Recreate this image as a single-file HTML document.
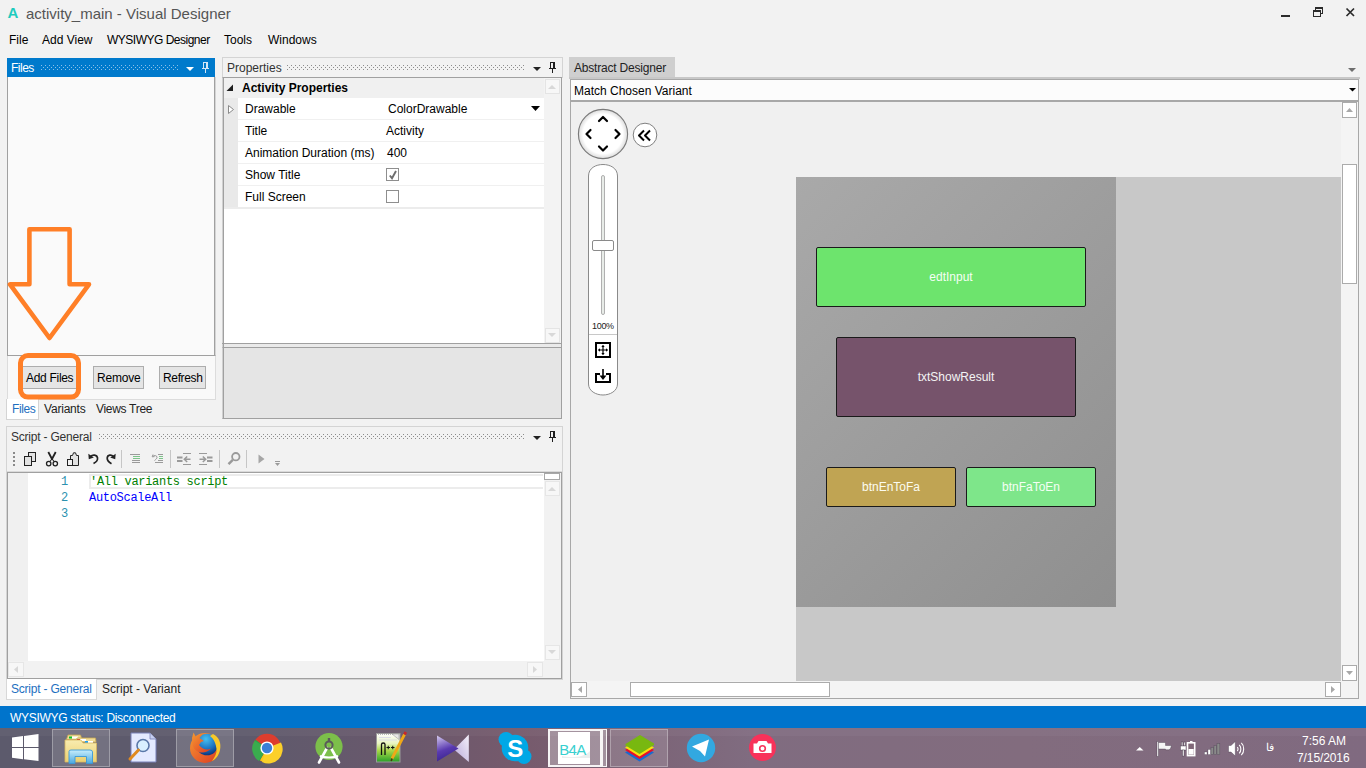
<!DOCTYPE html>
<html><head><meta charset="utf-8">
<style>
*{margin:0;padding:0;box-sizing:border-box}
html,body{width:1366px;height:768px;overflow:hidden;background:#f2f2f2;font-family:"Liberation Sans",sans-serif;font-size:12px;color:#000;position:relative}
.a{position:absolute}
.t{position:absolute;white-space:nowrap;line-height:1}
.dots{position:absolute;background-image:radial-gradient(circle,#a8a8a8 0.7px,transparent 1px);background-size:4px 4px}
.btn{position:absolute;background:#e5e5e5;border:1px solid #adadad}
.mono{font-family:"Liberation Mono",monospace;letter-spacing:-0.3px}
svg{position:absolute;overflow:visible}
</style></head><body>

<!-- ===== title bar ===== -->
<div class="t" style="left:7.5px;top:5px;font-size:15px;font-weight:bold;color:#1ecbbe">A</div>
<div class="t" style="left:26px;top:6px;font-size:15px;color:#555">activity_main - Visual Designer</div>
<svg style="left:0;top:0" width="1366" height="30">
 <g fill="#2b2b2b">
  <rect x="1281" y="15" width="9" height="2"/>
  <rect x="1313" y="10" width="8" height="2"/><rect x="1313" y="10" width="1" height="7"/><rect x="1320" y="10" width="1" height="7"/><rect x="1313" y="16" width="8" height="1"/>
  <rect x="1315" y="7" width="8" height="2"/><rect x="1315" y="7" width="1" height="3"/><rect x="1322" y="7" width="1" height="7"/><rect x="1321" y="13" width="2" height="1"/>
 </g>
 <path d="M1346.5 8.5L1354 16M1354 8.5L1346.5 16" stroke="#2b2b2b" stroke-width="1.7"/>
</svg>

<!-- ===== menu ===== -->
<div class="t" style="left:9px;top:34px">File</div>
<div class="t" style="left:42px;top:34px">Add View</div>
<div class="t" style="left:107px;top:34px;letter-spacing:-0.5px">WYSIWYG Designer</div>
<div class="t" style="left:224px;top:34px">Tools</div>
<div class="t" style="left:268px;top:34px">Windows</div>

<!-- ===== Files panel ===== -->
<div class="a" style="left:7px;top:58px;width:208px;height:19px;background:#007acc"></div>
<div class="t" style="left:11px;top:62px;color:#fff;letter-spacing:-0.5px">Files</div>
<svg style="left:0;top:0" width="200" height="80"><defs><pattern id="pd1" patternUnits="userSpaceOnUse" x="1" y="65" width="4" height="4"><rect x="0" y="0" width="1" height="1" fill="#8cc0ea"/><rect x="2" y="2" width="1" height="1" fill="#8cc0ea"/></pattern></defs><rect x="41" y="65" width="137" height="5" fill="url(#pd1)"/></svg>
<svg style="left:0;top:0" width="220" height="80">
 <path d="M186 67H194L190 71Z" fill="#fff"/>
 <g fill="#d4e6f6"><rect x="203" y="62" width="5" height="1"/><rect x="203" y="62" width="1" height="6"/><rect x="206" y="62" width="2" height="6"/><rect x="202" y="68" width="7" height="1"/><rect x="205" y="69" width="1" height="4"/></g>
</svg>
<div class="a" style="left:7px;top:77px;width:209px;height:279px;background:#fafafa;border:1px solid #a0a0a0;border-top:none;border-right:1px solid #d4d4d4;box-shadow:inset -1px 0 0 #a0a0a0"></div>
<div class="a" style="left:7px;top:356px;width:209px;height:44px;background:#f9f9f9;border:1px solid #dcdcdc;border-top:none"></div>
<div class="btn" style="left:21px;top:366px;width:60px;height:23px"></div>
<div class="t" style="left:26px;top:372px;letter-spacing:-0.3px">Add Files</div>
<div class="btn" style="left:93px;top:366px;width:51px;height:23px"></div>
<div class="t" style="left:97px;top:372px;letter-spacing:-0.2px">Remove</div>
<div class="btn" style="left:159px;top:366px;width:47px;height:23px"></div>
<div class="t" style="left:163px;top:372px;letter-spacing:-0.35px">Refresh</div>
<div class="a" style="left:6px;top:399px;width:33px;height:21px;background:#fff;border:1px solid #d4d4d4;border-top:none"></div>
<div class="t" style="left:12px;top:403px;color:#1e6fc0;letter-spacing:-0.4px">Files</div>
<div class="t" style="left:44px;top:403px;color:#222;letter-spacing:-0.2px">Variants</div>
<div class="t" style="left:96px;top:403px;color:#222;letter-spacing:-0.3px">Views Tree</div>
<svg style="left:0;top:0" width="220" height="420">
 <path d="M29.4 229.3H69.6V284.3H89L49.5 338L10 284.3H29.4Z" fill="none" stroke="#ff7f27" stroke-width="4.6" stroke-linejoin="round"/>
 <rect x="20.5" y="355.5" width="58" height="41.6" rx="7.5" fill="none" stroke="#ff7f27" stroke-width="5"/>
</svg>

<!-- ===== Properties panel ===== -->
<div class="a" style="left:222px;top:57px;width:341px;height:21px;background:#f2f2f2;border:1px solid #d4d4d4;border-bottom:none"></div>
<div class="t" style="left:227px;top:62px;color:#333">Properties</div>
<svg style="left:0;top:0" width="560" height="80"><defs><pattern id="pd2" patternUnits="userSpaceOnUse" x="3" y="65" width="4" height="4"><rect x="0" y="0" width="1" height="1" fill="#8c8c8c"/><rect x="2" y="2" width="1" height="1" fill="#8c8c8c"/></pattern></defs><rect x="287" y="65" width="237" height="5" fill="url(#pd2)"/></svg>
<svg style="left:0;top:0" width="570" height="80">
 <path d="M533 67H541L537 71Z" fill="#222"/>
 <g fill="#1e1e1e"><rect x="550" y="62" width="5" height="1"/><rect x="550" y="62" width="1" height="6"/><rect x="553" y="62" width="2" height="6"/><rect x="549" y="68" width="7" height="1"/><rect x="552" y="69" width="1" height="4"/></g>
</svg>
<div class="a" style="left:222px;top:77px;width:340px;height:267px;background:#fff;border:1px solid #a0a0a0;border-bottom:none;border-left-color:#d0d0d0;box-shadow:inset 1px 0 0 #a0a0a0"></div>
<div class="a" style="left:224px;top:78px;width:320px;height:20px;background:#f0f0f0"></div>
<div class="a" style="left:224px;top:98px;width:14px;height:110px;background:#e9e9e9"></div>
<div class="a" style="left:544px;top:78px;width:17px;height:265px;background:#f3f3f3"></div>
<div class="a" style="left:545px;top:79px;width:15px;height:15px;background:#f7f7f7;border:1px solid #e4e4e4"></div>
<div class="a" style="left:545px;top:328px;width:15px;height:15px;background:#f7f7f7;border:1px solid #e4e4e4"></div>
<svg style="left:0;top:0" width="570" height="420">
 <path d="M548 89H556L552 85Z" fill="#d8d8d8"/>
 <path d="M548 333H556L552 337Z" fill="#d8d8d8"/>
 <path d="M226.5 91H233V84.5Z" fill="#1e1e1e"/>
 <path d="M228.5 105.5L233.5 109.5L228.5 113.5Z" fill="#fff" stroke="#8a8a8a" stroke-width="1"/>
</svg>
<div class="t" style="left:242px;top:82px;font-weight:bold">Activity Properties</div>
<div class="a" style="left:238px;top:119px;width:306px;height:1px;background:#f0f0f0"></div>
<div class="a" style="left:238px;top:141px;width:306px;height:1px;background:#f0f0f0"></div>
<div class="a" style="left:238px;top:163px;width:306px;height:1px;background:#f0f0f0"></div>
<div class="a" style="left:238px;top:185px;width:306px;height:1px;background:#f0f0f0"></div>
<div class="a" style="left:224px;top:207px;width:320px;height:2px;background:#ececec"></div>
<div class="t" style="left:245px;top:103px">Drawable</div>
<div class="t" style="left:245px;top:125px">Title</div>
<div class="t" style="left:245px;top:147px">Animation Duration (ms)</div>
<div class="t" style="left:245px;top:169px">Show Title</div>
<div class="t" style="left:245px;top:191px">Full Screen</div>
<div class="t" style="left:388px;top:103px">ColorDrawable</div>
<div class="t" style="left:386px;top:125px">Activity</div>
<div class="t" style="left:387px;top:147px">400</div>
<svg style="left:0;top:0" width="570" height="220">
 <path d="M531 106H540L535.5 111Z" fill="#000"/>
 <rect x="386.5" y="168.5" width="12" height="12" fill="#fff" stroke="#8e8e8e"/>
 <path d="M389.8 175.5L392 178.2L396 171" fill="none" stroke="#6e6e6e" stroke-width="1.9"/>
 <rect x="386.5" y="190.5" width="12" height="12" fill="#fff" stroke="#8e8e8e"/>
</svg>
<div class="a" style="left:222px;top:343px;width:340px;height:1px;background:#a0a0a0"></div>
<div class="a" style="left:222px;top:344px;width:340px;height:3px;background:#eaeaea;border-left:1px solid #d0d0d0;border-right:1px solid #a0a0a0;box-shadow:inset 1px 0 0 #a0a0a0"></div>
<div class="a" style="left:222px;top:347px;width:340px;height:72px;background:#e5e5e5;border:1px solid #a0a0a0;border-left-color:#d0d0d0;box-shadow:inset 1px 0 0 #a0a0a0"></div>

<!-- ===== Abstract Designer ===== -->
<div class="a" style="left:569px;top:57px;width:106px;height:21px;background:#cfcfcf"></div>
<div class="t" style="left:574px;top:62px;color:#222;letter-spacing:-0.2px">Abstract Designer</div>
<svg style="left:0;top:0" width="1366" height="110">
 <path d="M1348 68H1356L1352 72Z" fill="#6e6e6e"/>
</svg>
<div class="a" style="left:569px;top:77px;width:791px;height:2px;background:#c8c8c8"></div>
<div class="a" style="left:570px;top:79px;width:789px;height:23px;background:#fcfcfc;border:1px solid #a8a8a8;border-bottom:2px solid #a8a8a8"></div>
<div class="t" style="left:574px;top:85px">Match Chosen Variant</div>
<svg style="left:0;top:0" width="1366" height="110">
 <path d="M1349 88H1356L1352.5 91.5Z" fill="#000"/>
</svg>
<div class="a" style="left:570px;top:102px;width:789px;height:597px;background:#f0f0f0;border:1px solid #a8a8a8;border-top:none"></div>
<!-- device area -->
<div class="a" style="left:796px;top:177px;width:545px;height:504px;background:#c8c8c8"></div>
<div class="a" style="left:796px;top:177px;width:320px;height:430px;background:linear-gradient(135deg,#a9a9a9 0%,#9c9c9c 50%,#8f8f8f 100%)"></div>
<div class="a" style="left:816px;top:247px;width:270px;height:60px;background:#6de46d;border:1px solid #1a1a1a;border-radius:2px"></div>
<div class="t" style="left:816px;top:271px;width:270px;text-align:center;color:#f4fff4">edtInput</div>
<div class="a" style="left:836px;top:337px;width:240px;height:80px;background:#76536b;border:1px solid #1a1a1a;border-radius:2px"></div>
<div class="t" style="left:836px;top:371px;width:240px;text-align:center;color:#f4f4f4">txtShowResult</div>
<div class="a" style="left:826px;top:467px;width:130px;height:40px;background:#c0a453;border:1px solid #1a1a1a;border-radius:2px"></div>
<div class="t" style="left:826px;top:481px;width:130px;text-align:center;color:#fcfcf0">btnEnToFa</div>
<div class="a" style="left:966px;top:467px;width:130px;height:40px;background:#7ee68a;border:1px solid #1a1a1a;border-radius:2px"></div>
<div class="t" style="left:966px;top:481px;width:130px;text-align:center;color:#f4fff4">btnFaToEn</div>
<!-- scrollbars -->
<div class="a" style="left:1341px;top:102px;width:17px;height:596px;background:#f4f4f4"></div>
<div class="a" style="left:571px;top:681px;width:770px;height:17px;background:#f4f4f4"></div>
<div class="a" style="left:1342px;top:102px;width:15px;height:16px;background:#fff;border:1px solid #ababab"></div>
<div class="a" style="left:1342px;top:164px;width:15px;height:120px;background:#fff;border:1px solid #ababab"></div>
<div class="a" style="left:1342px;top:665px;width:15px;height:16px;background:#fff;border:1px solid #ababab"></div>
<div class="a" style="left:571px;top:682px;width:16px;height:15px;background:#fff;border:1px solid #ababab"></div>
<div class="a" style="left:630px;top:682px;width:200px;height:15px;background:#fff;border:1px solid #ababab"></div>
<div class="a" style="left:1325px;top:682px;width:16px;height:15px;background:#fff;border:1px solid #ababab"></div>
<svg style="left:0;top:0" width="1366" height="700">
 <path d="M1346 112H1353L1349.5 108Z" fill="#a8a8a8"/>
 <path d="M1346 671H1353L1349.5 675Z" fill="#a8a8a8"/>
 <path d="M582 686V693L578 689.5Z" fill="#a8a8a8"/>
 <path d="M1331 686V693L1335 689.5Z" fill="#a8a8a8"/>
</svg>
<!-- nav controls -->
<svg style="left:0;top:0" width="700" height="400">
 <defs>
  <radialGradient id="cg" cx="50%" cy="50%" r="50%"><stop offset="80%" stop-color="#fff"/><stop offset="100%" stop-color="#dcdcdc"/></radialGradient>
 </defs>
 <circle cx="603" cy="134" r="24.6" fill="url(#cg)" stroke="#7a7a7a" stroke-width="1.1"/>
 <g fill="none" stroke="#000" stroke-width="2.2" stroke-linecap="round" stroke-linejoin="round">
  <path d="M599 121L603 117L607 121"/>
  <path d="M599 146.5L603 150.5L607 146.5"/>
  <path d="M590.5 130L586.5 134L590.5 138"/>
  <path d="M615.5 130L619.5 134L615.5 138"/>
 </g>
 <circle cx="645" cy="135" r="11.8" fill="#fff" stroke="#808080" stroke-width="1"/>
 <g fill="none" stroke="#000" stroke-width="2" stroke-linejoin="round">
  <path d="M644 130.5L639 135.5L644 140.5"/>
  <path d="M650 130.5L645 135.5L650 140.5"/>
 </g>
 <path d="M588.5 176C588.5 168 596 164.5 603 164.5C610 164.5 617.5 168 617.5 176V384C617.5 391 610 395 603 395C596 395 588.5 391 588.5 384Z" fill="#fff" stroke="#8a8a8a" stroke-width="1"/>
 <rect x="601.5" y="175.5" width="3" height="139" rx="1.5" fill="#e8ece8" stroke="#b0b0b0" stroke-width="1"/>
 <rect x="592.5" y="240.5" width="21" height="10" rx="1.5" fill="#fff" stroke="#8a8a8a" stroke-width="1"/>
 <path d="M589 334.5H617" stroke="#c8c8c8" stroke-width="1"/>
 <rect x="596" y="343" width="14" height="14" fill="none" stroke="#000" stroke-width="2"/>
 <g stroke="#000" stroke-width="1.2" fill="#000">
  <path d="M603 345.5V354.5M598.5 350H607.5" fill="none"/>
  <path d="M603 345L601.3 347H604.7Z M603 355L601.3 353H604.7Z M598 350L600 348.3V351.7Z M608 350L606 348.3V351.7Z" stroke="none"/>
 </g>
 <path d="M600 374H596V382H610V374H606" fill="none" stroke="#000" stroke-width="2"/>
 <path d="M603 369V378" stroke="#000" stroke-width="1.6"/>
 <path d="M599.5 375.5L603 380L606.5 375.5Z" fill="#000"/>
</svg>
<div class="t" style="left:592px;top:322px;font-size:9px;color:#222;letter-spacing:-0.3px">100%</div>

<!-- ===== Script panel ===== -->
<div class="a" style="left:6px;top:426px;width:557px;height:254px;background:#f2f2f2;border:1px solid #d4d4d4"></div>
<div class="t" style="left:11px;top:431px;color:#333;letter-spacing:-0.21px">Script - General</div>
<svg style="left:0;top:0" width="560" height="450"><defs><pattern id="pd3" patternUnits="userSpaceOnUse" x="3" y="434" width="4" height="4"><rect x="0" y="0" width="1" height="1" fill="#8c8c8c"/><rect x="2" y="2" width="1" height="1" fill="#8c8c8c"/></pattern></defs><rect x="99" y="434" width="425" height="5" fill="url(#pd3)"/></svg>
<svg style="left:0;top:0" width="570" height="480">
 <path d="M533 436H541L537 440Z" fill="#222"/>
 <g fill="#1e1e1e"><rect x="550" y="431" width="5" height="1"/><rect x="550" y="431" width="1" height="6"/><rect x="553" y="431" width="2" height="6"/><rect x="549" y="437" width="7" height="1"/><rect x="552" y="438" width="1" height="4"/></g>
</svg>
<!-- toolbar icons -->
<svg style="left:0;top:0" width="300" height="480">
 <g fill="#8a8a8a"><rect x="13" y="452" width="2" height="2"/><rect x="13" y="456" width="2" height="2"/><rect x="13" y="460" width="2" height="2"/><rect x="13" y="464" width="2" height="2"/></g>
 <rect x="28.5" y="452.5" width="7" height="9" fill="#e2e2e2" stroke="#222" stroke-width="1"/>
 <rect x="24.5" y="456.5" width="7" height="9" fill="#e2e2e2" stroke="#222" stroke-width="1"/>
 <path d="M48.3 452L52 459M55.7 452L52 459" stroke="#222" stroke-width="1.8" fill="none"/>
 <path d="M52 459L49.8 461.5M52 459L54.2 461.5" stroke="#222" stroke-width="1.1" fill="none"/>
 <circle cx="48.7" cy="463.6" r="2.2" fill="#f4f4f4" stroke="#222" stroke-width="1.3"/>
 <circle cx="55.3" cy="463.6" r="2.2" fill="#f4f4f4" stroke="#222" stroke-width="1.3"/>
 <path d="M70.5 465.5V455.5H72.5L73.5 452.8H75.5L76.5 455.5H78.5V465.5Z" fill="#e2e2e2" stroke="#222" stroke-width="1"/>
 <rect x="67.5" y="459.5" width="5" height="6" fill="#f2f2f2" stroke="#222" stroke-width="1"/>
 <path d="M90.5 456.5C92.5 454.5 97 454.5 97.5 458C98 461 95.5 462.5 93.5 463.5" fill="none" stroke="#222" stroke-width="1.7"/>
 <path d="M88.3 453.8L88.8 459.2L93.8 457.6Z" fill="#222"/>
 <path d="M113.5 456.5C111.5 454.5 107.5 454.5 107.2 458C107 461 109.5 462.5 111.5 463.7" fill="none" stroke="#222" stroke-width="1.7"/>
 <path d="M115.7 453.8L115.2 459.2L110.2 457.6Z" fill="#222"/>
 <g fill="#c6c6c6"><rect x="121" y="450" width="1" height="18"/><rect x="170" y="450" width="1" height="18"/><rect x="219" y="450" width="1" height="18"/><rect x="246" y="450" width="1" height="18"/></g>
 <g fill="#9a9a9a">
  <rect x="130" y="454" width="2" height="1"/><rect x="132" y="454" width="8" height="1"/>
  <rect x="132" y="460" width="8" height="1"/><rect x="132" y="462" width="8" height="1"/>
  <rect x="155" y="462" width="8" height="1"/><rect x="158" y="454" width="5" height="1"/><rect x="158" y="460" width="5" height="1"/>
  <rect x="183" y="453" width="8" height="1"/><rect x="183" y="464" width="8" height="1"/>
  <rect x="177" y="456.5" width="5.5" height="2"/><rect x="177" y="460" width="5.5" height="2"/>
  <rect x="199" y="453" width="8" height="1"/><rect x="199" y="464" width="8" height="1"/>
  <rect x="207" y="456.5" width="5.5" height="2"/><rect x="207" y="460" width="5.5" height="2"/>
 </g>
 <g fill="#7cc48a"><rect x="133" y="456" width="7" height="1"/><rect x="133" y="458" width="7" height="1"/><rect x="159" y="456" width="4" height="1"/><rect x="159" y="458" width="4" height="1"/></g>
 <path d="M153 454.5L152.2 456.8L154.5 456.6M152.6 456.5C154 455 157 455.3 157 457.3C157 458.5 155.5 459.8 154.5 460.5" fill="none" stroke="#9a9a9a" stroke-width="1"/>
 <path d="M190.5 459.3H184.5M187.2 456.5L184.3 459.3L187.2 462" fill="none" stroke="#9a9a9a" stroke-width="1.5"/>
 <path d="M199.5 459.3H205.5M202.8 456.5L205.7 459.3L202.8 462" fill="none" stroke="#9a9a9a" stroke-width="1.5"/>
 <circle cx="235.8" cy="456.7" r="3.7" fill="none" stroke="#9a9a9a" stroke-width="1.8"/>
 <path d="M232.8 459.8L228.5 464.2" stroke="#9a9a9a" stroke-width="2.4"/>
 <path d="M258.5 454.5V463.5L264.5 459Z" fill="#a6a6a6"/>
 <rect x="275" y="461" width="5" height="1" fill="#9a9a9a"/><path d="M275 463H280L277.5 466Z" fill="#9a9a9a"/>
</svg>
<!-- editor -->
<div class="a" style="left:7px;top:471px;width:555px;height:1px;background:#dadada"></div>
<div class="a" style="left:7px;top:472px;width:555px;height:207px;background:#fff;border:1px solid #a0a0a0"></div>
<div class="a" style="left:8px;top:473px;width:20px;height:188px;background:#f0f0f0"></div>
<div class="a" style="left:89px;top:474px;width:454px;height:15px;border:2px solid #ececec;border-right:none"></div>
<div class="a" style="left:8px;top:661px;width:536px;height:17px;background:#f2f2f2"></div>
<div class="a" style="left:544px;top:473px;width:17px;height:205px;background:#f2f2f2"></div>
<div class="a" style="left:544px;top:473px;width:16px;height:7px;background:#fff;border:1px solid #a8a8a8"></div>
<div class="a" style="left:545px;top:481px;width:15px;height:15px;background:#f7f7f7;border:1px solid #e6e6e6"></div>
<div class="a" style="left:545px;top:645px;width:15px;height:15px;background:#f7f7f7;border:1px solid #e6e6e6"></div>
<div class="a" style="left:8px;top:662px;width:16px;height:15px;background:#f7f7f7;border:1px solid #e6e6e6"></div>
<div class="a" style="left:527px;top:662px;width:16px;height:15px;background:#f7f7f7;border:1px solid #e6e6e6"></div>
<svg style="left:0;top:0" width="570" height="700">
 <path d="M548 491H556L552 487Z" fill="#d8d8d8"/>
 <path d="M548 650H556L552 654Z" fill="#d8d8d8"/>
 <path d="M18 666V673L14 669.5Z" fill="#d8d8d8"/>
 <path d="M533 666V673L537 669.5Z" fill="#d8d8d8"/>
</svg>
<div class="t mono" style="left:61px;top:476px;color:#2b91af">1</div>
<div class="t mono" style="left:61px;top:492px;color:#2b91af">2</div>
<div class="t mono" style="left:61px;top:508px;color:#2b91af">3</div>
<div class="t mono" style="left:90px;top:476px;color:#008000">'All variants script</div>
<div class="t mono" style="left:89px;top:492px;color:#0000ff">AutoScaleAll</div>
<!-- tabs -->
<div class="a" style="left:6px;top:679px;width:91px;height:21px;background:#fff;border:1px solid #d8d8d8;border-top:none"></div>
<div class="t" style="left:11px;top:683px;color:#1e6fc0;letter-spacing:-0.21px">Script - General</div>
<div class="t" style="left:102px;top:683px;color:#222">Script - Variant</div>

<!-- ===== status bar ===== -->
<div class="a" style="left:0;top:706px;width:1366px;height:22px;background:#0074cc"></div>
<div class="t" style="left:10px;top:712px;color:#fff;letter-spacing:-0.31px">WYSIWYG status: Disconnected</div>

<!-- ===== taskbar ===== -->
<div class="a" style="left:0;top:728px;width:1366px;height:40px;background:linear-gradient(90deg,#5c5a6c 0%,#5e5a6c 18%,#6a586c 30%,#765a6c 38%,#806c80 55%,#826c7e 75%,#806a80 100%)"></div>
<div class="a" style="left:0;top:728px;width:1366px;height:8px;background:rgba(255,255,255,0.04)"></div>
<!-- active buttons -->
<div class="a" style="left:52px;top:729px;width:58px;height:38px;background:rgba(255,255,255,0.14);border:1px solid rgba(255,255,255,0.3)"></div>
<div class="a" style="left:176px;top:729px;width:58px;height:38px;background:rgba(255,255,255,0.14);border:1px solid rgba(255,255,255,0.3)"></div>
<div class="a" style="left:548px;top:729px;width:54px;height:38px;background:rgba(255,255,255,0.3);border:2px solid rgba(255,255,255,0.9)"></div>
<div class="a" style="left:602px;top:729px;width:5px;height:38px;background:rgba(255,255,255,0.3);border:1px solid rgba(255,255,255,0.9)"></div>
<div class="a" style="left:610px;top:729px;width:58px;height:38px;background:rgba(255,255,255,0.14);border:1px solid rgba(255,255,255,0.3)"></div>
<svg style="left:0;top:728px" width="1366" height="40">
 <!-- windows logo -->
 <path d="M12 9.5L23 8V19H12Z M24 7.9L38.5 6V19H24Z M12 20H23V31.2L12 29.7Z M24 20H38.5V33L24 31.3Z" fill="#fff"/>
 <!-- explorer -->
 <defs>
  <linearGradient id="fold" x1="0" y1="0" x2="0" y2="1"><stop offset="0" stop-color="#f8ecb0"/><stop offset="1" stop-color="#ecd070"/></linearGradient>
  <linearGradient id="arch" x1="0" y1="0" x2="0" y2="1"><stop offset="0" stop-color="#c8eefc"/><stop offset="1" stop-color="#4aa8e0"/></linearGradient>
  <radialGradient id="ffb" cx="45%" cy="25%" r="80%"><stop offset="0" stop-color="#46c0f0"/><stop offset="0.6" stop-color="#1a70c0"/><stop offset="1" stop-color="#0a2a70"/></radialGradient>
  <linearGradient id="ffo" x1="0" y1="0" x2="1" y2="1"><stop offset="0" stop-color="#f59a30"/><stop offset="0.6" stop-color="#e8602a"/><stop offset="1" stop-color="#d83a20"/></linearGradient>
 </defs>
 <path d="M66.5 11.5L68 7H80.5L82 11.5Z" fill="#f0dc98" stroke="#c8a850" stroke-width="0.8"/>
 <rect x="69" y="8.5" width="3" height="2" fill="#12c030"/><rect x="72" y="8.5" width="6" height="2" fill="#fff"/>
 <path d="M76 14L77 10H95.5L96 14Z" fill="#f0dc98" stroke="#c8a850" stroke-width="0.8"/>
 <rect x="77" y="11" width="3" height="2" fill="#d82020"/><rect x="80" y="11" width="6" height="2" fill="#fff"/>
 <rect x="85" y="13" width="3" height="2" fill="#20a0f0"/><rect x="88" y="13" width="5" height="2" fill="#fff"/>
 <path d="M65 12H81L83 15H96.5V34H65Z" fill="url(#fold)" stroke="#d8b860" stroke-width="0.8"/>
 <path d="M69 23.5Q69 22 71 22H90Q92.5 22 92.5 24V35.5H86.5V28.5H75V35.5H69Z" fill="url(#arch)" stroke="#3a98d8" stroke-width="0.9"/>
 <!-- search doc -->
 <path d="M131 5H150L156 11V34H131Z" fill="#e4eaff" stroke="#7880b8" stroke-width="1"/>
 <path d="M150 5V11H156" fill="#c8d0f0" stroke="#7880b8" stroke-width="0.8"/>
 <circle cx="143" cy="17.5" r="6" fill="#d8f0ff" stroke="#5a78a8" stroke-width="1.6"/>
 <path d="M138.5 22L130 31" stroke="#e08a20" stroke-width="3" stroke-linecap="round"/>
 <!-- firefox -->
 <circle cx="205" cy="20" r="15" fill="url(#ffo)"/>
 <circle cx="207" cy="16.5" r="10.8" fill="url(#ffb)"/>
 <path d="M192 10L193.5 4.5L196 9C198 7 201 6.5 202 7L199.5 10L204 13L201 14L199 17C201 20 205 22 208 21.5L211 20.5C208 24 203 25.5 199 24C196 23 193 20 192.5 16Z" fill="url(#ffo)"/>
 <path d="M213 6C219 9 221.5 15 220 22C219 27 216 31 212 33C215 29 217 25 216.5 21C216 16 214 11 210 8Z" fill="#f8c828"/>
 <!-- chrome -->
 <circle cx="267" cy="20" r="14.3" fill="#dd3d2e"/>
 <path d="M267 20L255.5 11.8A14.3 14.3 0 0 0 260 32.5Z" fill="#2aa34a"/>
 <path d="M267 20L280.7 16A14.3 14.3 0 0 1 260 32.5Z" fill="#f8c81c"/>
 <path d="M267 20L254.6 12.8A14.3 14.3 0 0 0 259 33Z" fill="#3aab4e"/>
 <path d="M267 20L281 14.5A14.3 14.3 0 0 1 262 34Z" fill="#fbd02a"/>
 <circle cx="267" cy="20" r="6.6" fill="#fff"/>
 <circle cx="267" cy="20" r="5.2" fill="#3a80d8"/>
 <!-- android studio -->
 <circle cx="329" cy="18.5" r="13.6" fill="#7cbf4a"/>
 <path d="M319 34.5L327 20M339 34.5L331 20" stroke="#fff" stroke-width="2.6" stroke-linecap="round"/>
 <path d="M320 28C324 30 334 30 338 28" stroke="#fff" stroke-width="2" fill="none"/>
 <circle cx="329" cy="17" r="3.6" fill="none" stroke="#5a5a5a" stroke-width="2"/>
 <rect x="327.8" y="10" width="2.4" height="4" fill="#5a5a5a"/>
 <!-- notepad++ -->
 <defs><linearGradient id="npg" x1="0" y1="0" x2="0" y2="1"><stop offset="0" stop-color="#ffffff"/><stop offset="0.35" stop-color="#e8f4c0"/><stop offset="0.6" stop-color="#a8d848"/><stop offset="1" stop-color="#28a028"/></linearGradient></defs>
 <rect x="376.5" y="5.5" width="23.5" height="28.5" fill="url(#npg)" stroke="#9a9a9a" stroke-width="1"/>
 <path d="M378 6.5H398" stroke="#b8b8b8" stroke-width="1" stroke-dasharray="1 1"/>
 <path d="M379 9.5H391M379 12H397" stroke="#d8d8e8" stroke-width="0.8"/>
 <path d="M392 6L399 11.5V6Z" fill="#e8e8e8" stroke="#a0a0a0" stroke-width="0.6"/>
 <path d="M381.5 27V16.5C381.5 14.5 385 14.5 385 16.5V27" fill="none" stroke="#111" stroke-width="1.3"/>
 <path d="M386.5 19.5H390M388.25 17.75V21.25M391 19.5H394.5M392.75 17.75V21.25" stroke="#111" stroke-width="1"/>
 <path d="M404.5 6.5L392 30.5" stroke="#f0a818" stroke-width="2.8"/>
 <path d="M392 30.5L391.2 33" stroke="#503010" stroke-width="1.5"/>
 <path d="M404.5 6.5L405.8 4" stroke="#c82828" stroke-width="2.8"/>
 <!-- kmplayer -->
 <defs>
  <linearGradient id="kmL" x1="0" y1="0" x2="0.3" y2="1"><stop offset="0" stop-color="#d6ccf0"/><stop offset="0.6" stop-color="#5a3ab0"/><stop offset="1" stop-color="#3a2690"/></linearGradient>
  <linearGradient id="kmR" x1="1" y1="0" x2="0" y2="1"><stop offset="0" stop-color="#f4f0fa"/><stop offset="1" stop-color="#b8a8d8"/></linearGradient>
 </defs>
 <path d="M454 21.5L468.8 6.5V34Z" fill="url(#kmR)"/>
 <path d="M437 7.5L458.5 20.5L437 33.5Z" fill="url(#kmL)"/>
 <!-- skype -->
 <circle cx="506" cy="11.5" r="7.5" fill="#00a8e6"/><circle cx="524" cy="28.5" r="7.5" fill="#00a8e6"/>
 <circle cx="515" cy="20" r="13.3" fill="#00a8e6"/>
 <text x="515.2" y="29" text-anchor="middle" font-family="Liberation Sans" font-weight="bold" font-size="24" fill="#fff">S</text>
 <!-- b4a -->
 <rect x="558" y="4" width="32" height="32" fill="#fff"/>
 <path d="M562 28C570 30 584 30 590 23V30H562Z" fill="#eaeeee"/>
 <text x="572.5" y="27" text-anchor="middle" font-family="Liberation Sans" font-size="15" fill="#38d0d0" letter-spacing="-0.6">B4A</text>
 <!-- bluestacks -->
 <path d="M625 22L639.5 13L654 22L639.5 31Z" fill="#1a6ad0" transform="translate(0,2.5)"/>
 <path d="M625 22L639.5 13L654 22L639.5 31Z" fill="#e8102a" transform="translate(0,0)"/>
 <path d="M625 19.5L639.5 10.5L654 19.5L639.5 28.5Z" fill="#f8e010"/>
 <path d="M625.5 16L640 7L654 15.5L654 17L639.5 26L625.5 17.5Z" fill="#78b810"/>
 <!-- telegram -->
 <circle cx="701" cy="20" r="14.2" fill="#32a8e0"/>
 <path d="M692 18.5L709 11.5L705 28.5L700 23Z" fill="#fff"/>
 <!-- camera -->
 <circle cx="762.5" cy="19.5" r="13.5" fill="#f8325a"/>
 <path d="M753.5 15.5H757L758.5 13H766.5L768 15.5H771.5V25H753.5Z" fill="#fff"/>
 <circle cx="762.5" cy="20.5" r="2.8" fill="none" stroke="#f8325a" stroke-width="1.6"/>
 <!-- tray -->
 <path d="M1136 22.5H1143.5L1139.75 19Z" fill="#fff"/>
 <g stroke="#3a3040" stroke-width="0.6" stroke-opacity="0.6">
 <rect x="1157" y="13.3" width="1.4" height="15" fill="#fff"/>
 <path d="M1158.4 14.5H1165.5V17.5H1171.5L1170.5 20.5L1169 21.8H1165.5V21H1158.4Z" fill="#f4f4f4"/>
 <rect x="1181.5" y="14" width="1.3" height="4" fill="#fff"/><rect x="1184" y="14" width="1.3" height="4" fill="#fff"/>
 <rect x="1180.5" y="18" width="5.5" height="4" fill="#fff"/><rect x="1182.6" y="22" width="1.4" height="6" fill="#fff"/>
 </g>
 <rect x="1187.5" y="14.8" width="7.2" height="12.8" fill="#806878" stroke="#fff" stroke-width="1.6"/>
 <rect x="1190" y="13" width="2.5" height="1.4" fill="#fff"/>
 <rect x="1188.5" y="21" width="5.2" height="5.6" fill="#fff"/>
 <g stroke="#3a3040" stroke-width="0.5" stroke-opacity="0.5">
 <rect x="1204.5" y="24" width="2.5" height="2.5" fill="#fff"/><rect x="1208" y="21.5" width="2.5" height="5" fill="#fff"/>
 <rect x="1211" y="19.5" width="2.5" height="7" fill="#8a8a8a"/><rect x="1214" y="17.5" width="2.5" height="9" fill="#8a8a8a"/><rect x="1217" y="15.5" width="2.8" height="11" fill="#8a8a8a"/>
 </g>
 <path d="M1228.5 17.5H1231L1235.3 13.5V28L1231 24H1228.5Z" fill="#fff" stroke="#3a3040" stroke-width="0.6" stroke-opacity="0.6"/>
 <path d="M1237.3 19.2C1238.3 20.2 1238.3 22 1237.3 23M1239.2 16.8C1241.4 18.8 1241.4 23.2 1239.2 25.4M1241.3 14.8C1244.5 17.5 1244.5 24.5 1241.3 27.2" fill="none" stroke="#fff" stroke-width="1.1"/>
</svg>
<div class="t" style="left:1266px;top:742px;color:#fff;font-size:11px">فا</div>
<div class="t" style="left:1302px;top:735px;color:#fff">7:56 AM</div>
<div class="t" style="left:1297px;top:752px;color:#fff;letter-spacing:-0.1px">7/15/2016</div>

</body></html>
